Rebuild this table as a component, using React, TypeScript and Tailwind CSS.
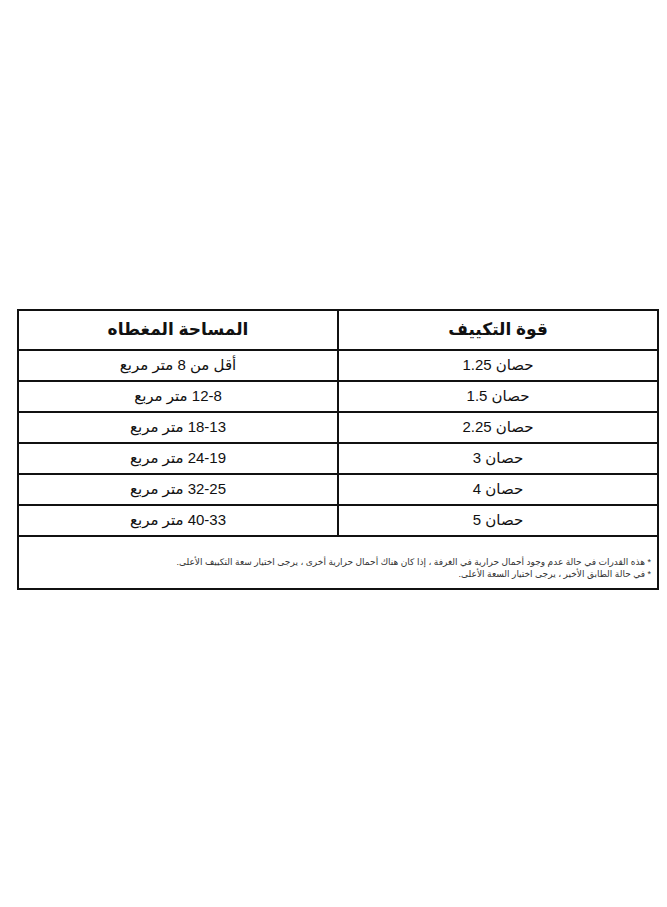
export default function App() {
  const rows = [
    ['حصان 1.25', 'أقل من 8 متر مربع'],
    ['حصان 1.5', '12-8 متر مربع'],
    ['حصان 2.25', '18-13 متر مربع'],
    ['حصان 3', '24-19 متر مربع'],
    ['حصان 4', '32-25 متر مربع'],
    ['حصان 5', '40-33 متر مربع'],
  ];

  return (
    <div
      className="min-h-[907px] bg-white pl-[17px] pt-[309px] text-[#111]"
      style={{ fontFamily: '"Liberation Sans", "DejaVu Sans", sans-serif' }}
    >
      <table dir="rtl" className="w-[642px] table-fixed border-collapse border-2 border-[#111]">
        <thead>
          <tr className="h-[40px]">
            <th className="w-1/2 border-2 border-[#111] text-[17px] font-bold">قوة التكييف</th>
            <th className="w-1/2 border-2 border-[#111] text-[17px] font-bold">المساحة المغطاه</th>
          </tr>
        </thead>
        <tbody>
          {rows.map(([power, area]) => (
            <tr key={power} className="h-[31px]">
              <td className="border-2 border-[#111] text-center text-[15px]">{power}</td>
              <td className="border-2 border-[#111] text-center text-[15px]">{area}</td>
            </tr>
          ))}
          <tr className="h-[53px]">
            <td colSpan={2} className="border-2 border-[#111] px-[6px] pt-[19px] align-top text-[9px] leading-[12px] text-[#333]">
              <p>* هذه القدرات في حالة عدم وجود أحمال حرارية في الغرفة ، إذا كان هناك أحمال حرارية أخرى ، يرجى اختيار سعة التكييف الأعلى.</p>
              <p>* في حالة الطابق الأخير ، يرجى اختيار السعة الأعلى.</p>
            </td>
          </tr>
        </tbody>
      </table>
    </div>
  );
}
